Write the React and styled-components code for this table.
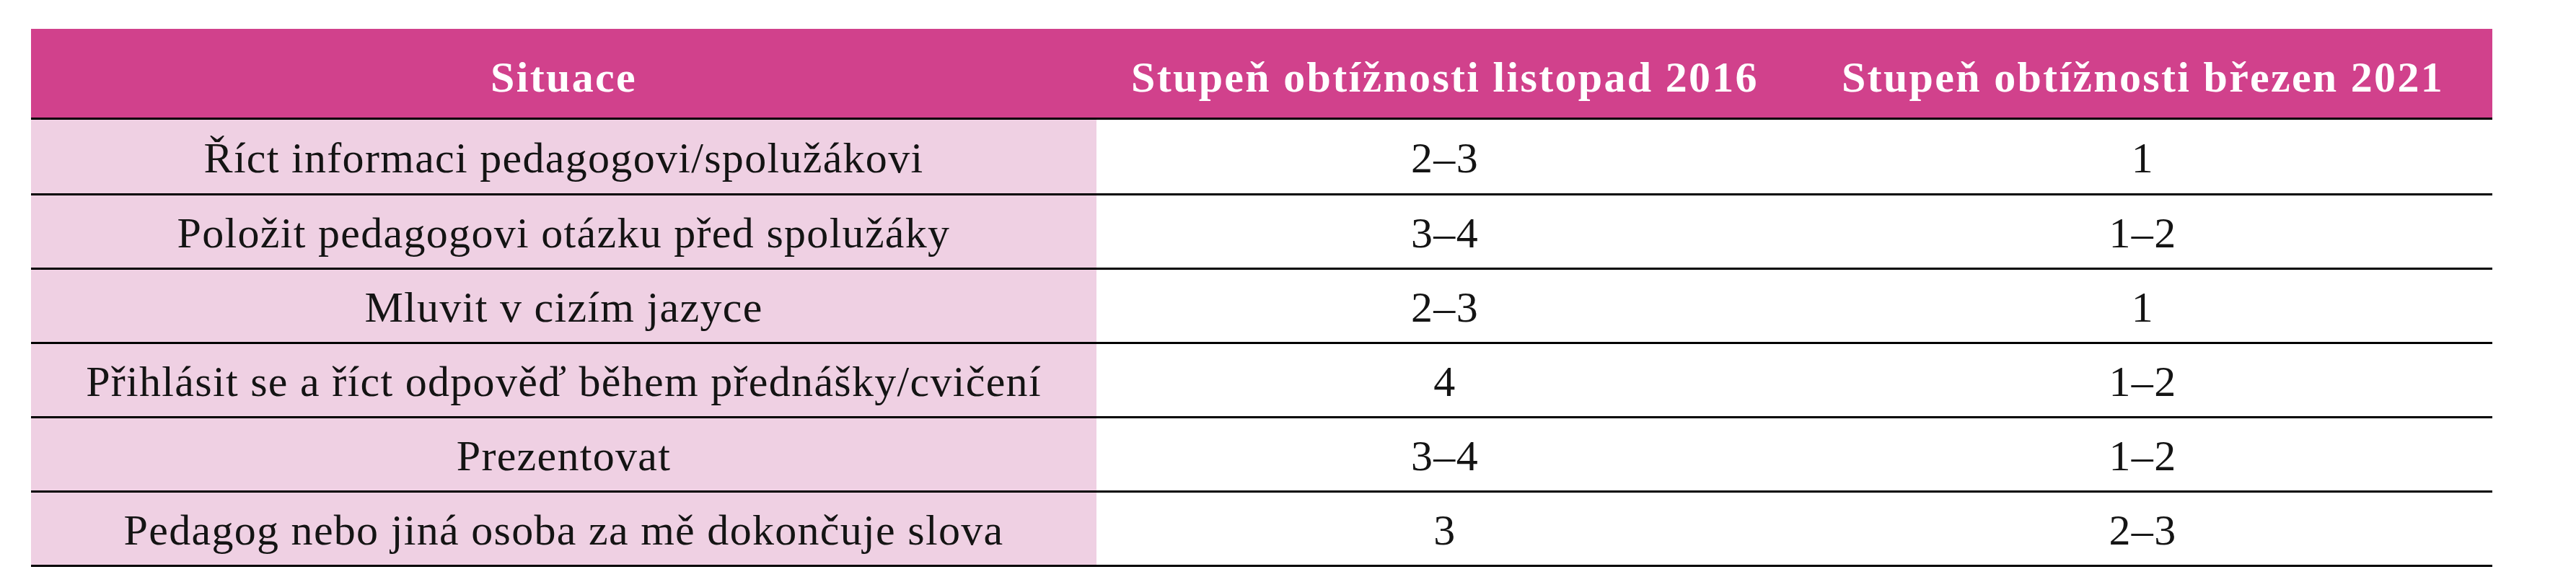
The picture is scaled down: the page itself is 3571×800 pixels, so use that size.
import React from 'react'
import styled, { createGlobalStyle } from 'styled-components'

const rows = [
  { situace: 'Říct informaci pedagogovi/spolužákovi', y2016: '2–3', y2021: '1' },
  { situace: 'Položit pedagogovi otázku před spolužáky', y2016: '3–4', y2021: '1–2' },
  { situace: 'Mluvit v cizím jazyce', y2016: '2–3', y2021: '1' },
  { situace: 'Přihlásit se a říct odpověď během přednášky/cvičení', y2016: '4', y2021: '1–2' },
  { situace: 'Prezentovat', y2016: '3–4', y2021: '1–2' },
  { situace: 'Pedagog nebo jiná osoba za mě dokončuje slova', y2016: '3', y2021: '2–3' },
]

const App = () => {
  return (
    <>
      <GlobalStyle />
      <Page>
        <Table>
          <HeadRow>
            <HeadCell>Situace</HeadCell>
            <HeadCell>Stupeň obtížnosti listopad 2016</HeadCell>
            <HeadCell>Stupeň obtížnosti březen 2021</HeadCell>
          </HeadRow>
          {rows.map((row, i) => (
            <BodyRow key={i} $first={i === 0}>
              <Cell $shaded>{row.situace}</Cell>
              <Cell>{row.y2016}</Cell>
              <Cell>{row.y2021}</Cell>
            </BodyRow>
          ))}
        </Table>
      </Page>
    </>
  )
}

export default App

const GlobalStyle = createGlobalStyle`
  body {
    margin: 0;
    background: #ffffff;
  }
`

const Page = styled.div`
  width: 3571px;
  height: 800px;
  padding: 40px 0 0 43px;
  box-sizing: border-box;
  font-family: "Liberation Serif", "Times New Roman", serif;
`

const Table = styled.div`
  width: 3412px;
  display: flex;
  flex-direction: column;
`

const HeadRow = styled.div`
  display: grid;
  grid-template-columns: 1477px 966px 969px;
  height: 126px;
  box-sizing: border-box;
  background: #d1418c;
  border-bottom: 3px solid #000;
`

const HeadCell = styled.div`
  display: flex;
  align-items: center;
  justify-content: center;
  padding-top: 12px;
  color: #ffffff;
  font-weight: 700;
  font-size: 60px;
  letter-spacing: 2.3px;
  white-space: nowrap;
`

const BodyRow = styled.div`
  display: grid;
  grid-template-columns: 1477px 966px 969px;
  height: ${p => (p.$first ? 105 : 103)}px;
  box-sizing: border-box;
  border-bottom: 3px solid #000;
`

const Cell = styled.div`
  display: flex;
  align-items: center;
  justify-content: center;
  padding-top: 5px;
  background: ${p => (p.$shaded ? '#efd0e3' : '#ffffff')};
  color: #141414;
  font-size: 60px;
  letter-spacing: 1.3px;
  white-space: nowrap;
`
